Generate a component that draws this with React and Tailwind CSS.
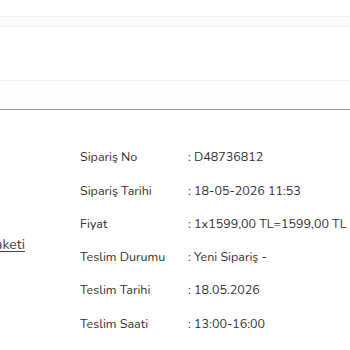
const rows = [
  ['Sipariş No', ': D48736812'],
  ['Sipariş Tarihi', ': 18-05-2026 11:53'],
  ['Fiyat', ': 1x1599,00 TL=1599,00 TL'],
  ['Teslim Durumu', ': Yeni Sipariş -'],
  ['Teslim Tarihi', ': 18.05.2026'],
  ['Teslim Saati', ': 13:00-16:00'],
  ['Teslim Adresi', ': Merkez'],
];

export default function App() {
  return (
    <div className="w-[350px] h-[350px] overflow-hidden bg-white text-[#333] font-['Nunito','Lato',sans-serif]">
      <div className="h-[16px]" />
      <div className="h-[11px] bg-[#fbfbfb] border-t border-b border-[#efefef]" />
      <div className="h-[53px]" />
      <div className="h-[30px] bg-[#fdfdfd] border-t border-[#f0f0f0] border-b border-b-[#9a9a9a]" />

      <div className="flex pt-[31px]">
        <div className="w-[25px] flex justify-end pt-[93px]">
          <a className="whitespace-nowrap text-[14px] text-[#444] underline underline-offset-2">
            Çiçek Paketi
          </a>
        </div>
        <div className="ml-[55px] flex-1">
          {rows.map(([label, value]) => (
            <div key={label} className="flex h-[33.3px] items-center text-[12.5px] whitespace-nowrap">
              <div className="w-[108px]">{label}</div>
              <div>{value}</div>
            </div>
          ))}
        </div>
      </div>
    </div>
  );
}
